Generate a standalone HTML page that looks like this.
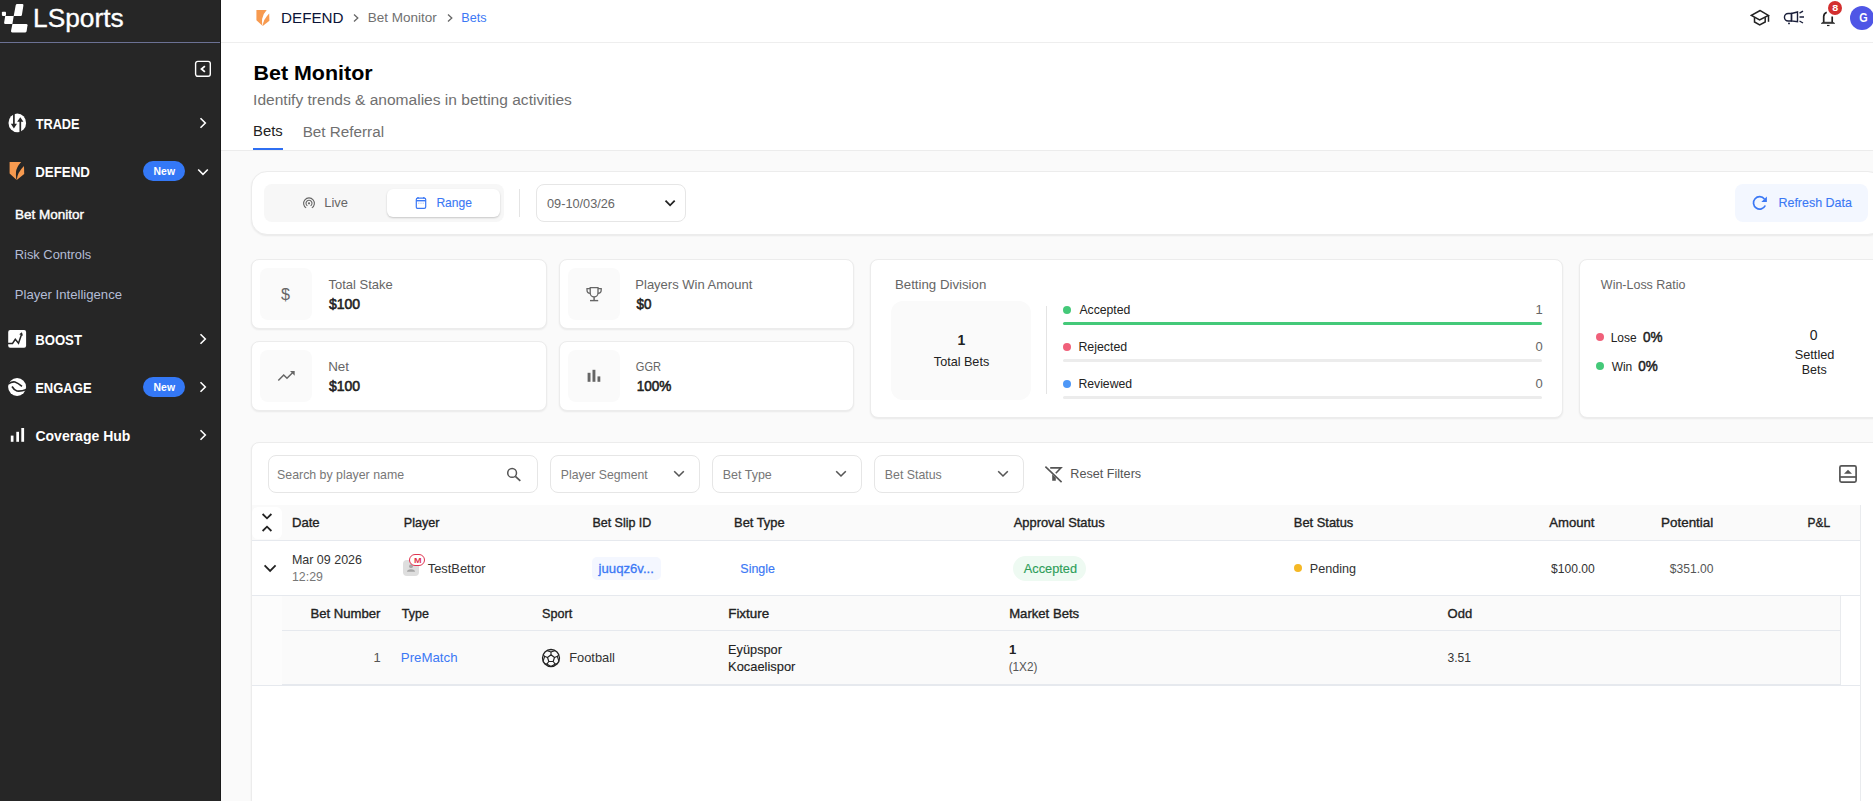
<!DOCTYPE html>
<html lang="en">
<head>
<meta charset="utf-8">
<title>Bet Monitor</title>
<style>
*{box-sizing:border-box;margin:0;padding:0}
html,body{width:1873px;height:801px;overflow:hidden;background:#fafafa}
body{font-family:"Liberation Sans",sans-serif;font-size:13px;color:#222;position:relative}
.b{position:absolute;display:block}
.t{position:absolute;white-space:nowrap;transform-origin:0 0;letter-spacing:0}
</style>
</head>
<body>
<!-- top bar + page head -->
<div class="b" style="left:221px;top:0px;width:1652px;height:43px;background:#fff;border-bottom:1px solid #eee;"></div>
<div class="b" style="left:221px;top:43px;width:1652px;height:108px;background:#fff;border-bottom:1px solid #ececec;"></div>
<!-- sidebar -->
<div class="b" style="left:0px;top:0px;width:221px;height:801px;background:#262626;border-right:1px solid #1a1a1a;"></div>
<div class="b" style="left:0px;top:42px;width:220px;height:1px;background:#6b7194;"></div>
<svg class="b" style="left:0px;top:0px" width="30" height="36" viewBox="0 0 30 36"><rect x="1.900" y="11.800" width="4.100" height="4.100" rx=".8" fill="#fff"/><path d="M17.200 4.100 H22.300 Q23.600 4.100 23.400 5.400 L21.900 15 Q21.700 15.900 20.800 15.900 H13.700 L15.700 5.200 Q15.900 4.100 17.200 4.100 Z" fill="#fff"/><path d="M5.200 15.900 H13.700 L12.400 23.900 H5 Q3.900 23.900 4.100 22.800 Z" fill="#fff"/><path d="M12.400 23.900 H26.200 Q27.700 23.900 27.500 25.300 L26.600 31.300 Q26.400 32.400 25.300 32.400 H12.200 Q10.800 32.400 11 31.100 Z" fill="#fff"/></svg>
<div class="t" style="left:33px;top:3px;font-size:25.5px;line-height:28px;color:#fff;transform:translate(.04px,.7px) scaleX(1.03);-webkit-text-stroke:.35px #fff;">LSports</div>
<svg class="b" style="left:194px;top:60px" width="18" height="18" viewBox="0 0 18 18"><rect x="1.600" y="1.400" width="14.700" height="14.900" rx="2.200" fill="none" stroke="#fff" stroke-width="1.400"/><path d="M10.900 6.100 L7.500 9 L10.900 11.900" fill="none" stroke="#fff" stroke-width="1.800"/></svg>
<svg class="b" style="left:8px;top:113px" width="19" height="20" viewBox="0 0 19 20"><ellipse cx="9.300" cy="9.900" rx="8.800" ry="9.300" fill="#fff"/><path d="M5.900 0 V12" stroke="#262626" stroke-width="1.700"/><path d="M2.800 10.800 H9 L5.900 15.600 Z" fill="#262626"/><path d="M12.300 20 V8" stroke="#262626" stroke-width="1.700"/><path d="M9.200 8.800 H15.400 L12.300 4.200 Z" fill="#262626"/></svg>
<div class="t" style="left:35px;top:116px;font-size:14px;line-height:16px;color:#fff;font-weight:bold;transform:translate(.66px,0px) scaleX(.91);">TRADE</div>
<svg class="b" style="left:196px;top:116.2px" width="14" height="14" viewBox="0 0 14 14"><path d="M4.500 2.200 L9.300 7 L4.500 11.800" fill="none" stroke="#fff" stroke-width="1.600"/></svg>
<svg class="b" style="left:8px;top:161px" width="18" height="20" viewBox="0 0 18 20"><path d="M1.600 1 H13.200 Q8.500 6 8 11 Q7.700 14.500 8.200 17.600 L8.700 19 L1.600 12.600 Z" fill="#f79a4f"/><path d="M16 5 L16.200 13 L8.700 19 Q9.300 11.500 16 5 Z" fill="#f79a4f"/></svg>
<div class="t" style="left:35px;top:164px;font-size:14px;line-height:16px;color:#fff;font-weight:bold;transform:translate(.22px,0px) scaleX(.95);">DEFEND</div>
<div class="b" style="left:143px;top:161px;width:42px;height:20px;background:#3478f6;border-radius:10px;"></div>
<div class="t" style="left:153px;top:165px;font-size:10.5px;line-height:12px;color:#fff;font-weight:bold;transform:translate(.61px,.2px) scaleX(.99);">New</div>
<svg class="b" style="left:196px;top:164.5px" width="14" height="14" viewBox="0 0 14 14"><path d="M2.200 4.500 L7 9.300 L11.800 4.500" fill="none" stroke="#fff" stroke-width="1.600"/></svg>
<div class="t" style="left:14px;top:207px;font-size:13px;line-height:15px;color:#fff;transform:translate(.93px,0px) scaleX(1.04);-webkit-text-stroke:.4px #fff;">Bet Monitor</div>
<div class="t" style="left:14px;top:247px;font-size:13px;line-height:15px;color:#b4bdd6;transform:translate(.74px,0px) scaleX(.99);">Risk Controls</div>
<div class="t" style="left:14px;top:287px;font-size:13px;line-height:15px;color:#b4bdd6;transform:translate(.73px,0px) scaleX(1.01);">Player Intelligence</div>
<svg class="b" style="left:8px;top:330px" width="19" height="19" viewBox="0 0 19 19"><rect x=".2" y="0" width="17.900" height="17.800" rx="2" fill="#fff"/><path d="M0 13.500 H4.500 L7.300 9.300 L10.500 13.200 L13.500 4.500" stroke="#262626" stroke-width="1.500" fill="none"/><path d="M11.200 4.300 L15 5.700 L13.900 2.200 Z" fill="#262626"/></svg>
<div class="t" style="left:35px;top:332px;font-size:14px;line-height:16px;color:#fff;font-weight:bold;transform:translate(.14px,0px) scaleX(.94);">BOOST</div>
<svg class="b" style="left:196px;top:332px" width="14" height="14" viewBox="0 0 14 14"><path d="M4.500 2.200 L9.300 7 L4.500 11.800" fill="none" stroke="#fff" stroke-width="1.600"/></svg>
<svg class="b" style="left:8px;top:378px" width="19" height="19" viewBox="0 0 19 19"><circle cx="9.100" cy="9" r="9" fill="#fff"/><path d="M0 6.200 Q4 3.300 7 4 Q10 5 14 8.300" stroke="#262626" stroke-width="1.600" fill="none"/><path d="M4 8.500 Q6 12 9 13 Q13 13.500 18.500 11.500" stroke="#262626" stroke-width="1.600" fill="none"/></svg>
<div class="t" style="left:35px;top:380px;font-size:14px;line-height:16px;color:#fff;font-weight:bold;transform:translate(.14px,0px) scaleX(.93);">ENGAGE</div>
<div class="b" style="left:143px;top:377px;width:42px;height:20px;background:#3478f6;border-radius:10px;"></div>
<div class="t" style="left:153px;top:381px;font-size:10.5px;line-height:12px;color:#fff;font-weight:bold;transform:translate(.61px,.2px) scaleX(.99);">New</div>
<svg class="b" style="left:196px;top:380px" width="14" height="14" viewBox="0 0 14 14"><path d="M4.500 2.200 L9.300 7 L4.500 11.800" fill="none" stroke="#fff" stroke-width="1.600"/></svg>
<svg class="b" style="left:8px;top:426px" width="18" height="18" viewBox="0 0 18 18"><rect x="2.800" y="9.600" width="2.700" height="6.200" fill="#fff"/><rect x="8.300" y="5.800" width="2.700" height="10" fill="#fff"/><rect x="13.300" y="2" width="2.800" height="13.800" fill="#fff"/></svg>
<div class="t" style="left:35px;top:428px;font-size:14px;line-height:16px;color:#fff;font-weight:bold;transform:translate(.43px,0px);">Coverage Hub</div>
<svg class="b" style="left:196px;top:428px" width="14" height="14" viewBox="0 0 14 14"><path d="M4.500 2.200 L9.300 7 L4.500 11.800" fill="none" stroke="#fff" stroke-width="1.600"/></svg>
<!-- breadcrumb -->
<svg class="b" style="left:255px;top:9px" width="16" height="18" viewBox="0 0 18 20"><path d="M1.600 1 H13.200 Q8.500 6 8 11 Q7.700 14.500 8.200 17.600 L8.700 19 L1.600 12.600 Z" fill="#f79a4f"/><path d="M16 5 L16.200 13 L8.700 19 Q9.300 11.500 16 5 Z" fill="#f79a4f"/></svg>
<div class="t" style="left:281px;top:9px;font-size:15.5px;line-height:17px;color:#0c1437;transform:translate(.05px,.3px) scaleX(.98);">DEFEND</div>
<svg class="b" style="left:349.5px;top:12px" width="12" height="12" viewBox="0 0 12 12"><path d="M4 2.500 L7.800 6 L4 9.500" fill="none" stroke="#666" stroke-width="1.300"/></svg>
<div class="t" style="left:367px;top:10px;font-size:12.5px;line-height:14px;color:#707070;transform:translate(.7px,.9px) scaleX(1.08);">Bet Monitor</div>
<svg class="b" style="left:443.5px;top:12px" width="12" height="12" viewBox="0 0 12 12"><path d="M4 2.500 L7.800 6 L4 9.500" fill="none" stroke="#666" stroke-width="1.300"/></svg>
<div class="t" style="left:461px;top:10px;font-size:12.5px;line-height:14px;color:#3b78f5;transform:translate(.36px,.9px) scaleX(1.01);">Bets</div>
<!-- page head -->
<div class="t" style="left:253px;top:61px;font-size:19.5px;line-height:22px;color:#000;font-weight:bold;transform:translate(.48px,.7px) scaleX(1.1);">Bet Monitor</div>
<div class="t" style="left:253px;top:91px;font-size:14px;line-height:16px;color:#707070;transform:translate(.07px,.6px) scaleX(1.11);">Identify trends &amp; anomalies in betting activities</div>
<div class="t" style="left:252px;top:122px;font-size:14px;line-height:16px;color:#222;transform:translate(.98px,.7px) scaleX(1.06);">Bets</div>
<div class="t" style="left:302px;top:123px;font-size:14px;line-height:16px;color:#707070;transform:translate(.65px,.8px) scaleX(1.09);">Bet Referral</div>
<div class="b" style="left:253px;top:148px;width:30px;height:2px;background:#2f6ff2;"></div>
<!-- filter card -->
<div class="b" style="left:251px;top:171px;width:1633px;height:64px;background:#fff;border-radius:16px;border:1px solid #ececec;box-shadow:0 1px 2px rgba(0,0,0,.07);"></div>
<div class="b" style="left:264px;top:184px;width:240px;height:38px;background:#f7f7f7;border-radius:8px;"></div>
<div class="t" style="left:324px;top:194px;font-size:13px;line-height:15px;color:#666;transform:translate(.35px,.9px) scaleX(.99);">Live</div>
<div class="b" style="left:386.5px;top:188.5px;width:113.5px;height:28.5px;background:#fff;border-radius:6px;box-shadow:0 1px 2px rgba(0,0,0,.2);"></div>
<div class="t" style="left:436px;top:194px;font-size:13px;line-height:15px;color:#3b78f5;transform:translate(.38px,.9px) scaleX(.93);-webkit-text-stroke:.12px #3b78f5;">Range</div>
<div class="b" style="left:519px;top:189px;width:1px;height:28px;background:#e4e4e4;"></div>
<div class="b" style="left:536px;top:184px;width:150px;height:38px;background:#fff;border-radius:8px;border:1px solid #e6e6e6;"></div>
<div class="t" style="left:547px;top:196px;font-size:12px;line-height:14px;color:#666;transform:translate(0px,.6px) scaleX(1.06);">09-10/03/26</div>
<div class="b" style="left:1735px;top:184px;width:133px;height:38px;background:#f3f7ff;border-radius:8px;"></div>
<div class="t" style="left:1778px;top:195px;font-size:13px;line-height:15px;color:#3b78f5;transform:translate(.44px,.1px) scaleX(.96);-webkit-text-stroke:.12px #3b78f5;">Refresh Data</div>
<!-- stat cards -->
<div class="b" style="left:251px;top:259px;width:296px;height:70px;background:#fff;border-radius:8px;border:1px solid #ececec;box-shadow:0 1px 2px rgba(0,0,0,.07);"></div>
<div class="b" style="left:260px;top:268px;width:52px;height:52px;background:#fafafa;border-radius:8px;"></div>
<div class="t" style="left:328px;top:277px;font-size:13px;line-height:15px;color:#666;transform:translate(.41px,0px);">Total Stake</div>
<div class="t" style="left:328px;top:295px;font-size:14px;line-height:16px;color:#222;transform:translate(.89px,.6px) scaleX(1);-webkit-text-stroke:.55px #222;">$100</div>
<div class="b" style="left:559px;top:259px;width:295px;height:70px;background:#fff;border-radius:8px;border:1px solid #ececec;box-shadow:0 1px 2px rgba(0,0,0,.07);"></div>
<div class="b" style="left:568px;top:268px;width:52px;height:52px;background:#fafafa;border-radius:8px;"></div>
<div class="t" style="left:635px;top:277px;font-size:13px;line-height:15px;color:#666;transform:translate(.33px,0px);">Players Win Amount</div>
<div class="t" style="left:636px;top:295px;font-size:14px;line-height:16px;color:#222;transform:translate(.6px,.6px) scaleX(.96);-webkit-text-stroke:.55px #222;">$0</div>
<div class="b" style="left:251px;top:341px;width:296px;height:70px;background:#fff;border-radius:8px;border:1px solid #ececec;box-shadow:0 1px 2px rgba(0,0,0,.07);"></div>
<div class="b" style="left:260px;top:350px;width:52px;height:52px;background:#fafafa;border-radius:8px;"></div>
<div class="t" style="left:328px;top:359px;font-size:13px;line-height:15px;color:#666;transform:translate(.2px,0px) scaleX(1.03);">Net</div>
<div class="t" style="left:328px;top:377px;font-size:14px;line-height:16px;color:#222;transform:translate(.89px,.6px) scaleX(1);-webkit-text-stroke:.55px #222;">$100</div>
<div class="b" style="left:559px;top:341px;width:295px;height:70px;background:#fff;border-radius:8px;border:1px solid #ececec;box-shadow:0 1px 2px rgba(0,0,0,.07);"></div>
<div class="b" style="left:568px;top:350px;width:52px;height:52px;background:#fafafa;border-radius:8px;"></div>
<div class="t" style="left:635px;top:359px;font-size:13px;line-height:15px;color:#666;transform:translate(.85px,0px) scaleX(.85);">GGR</div>
<div class="t" style="left:636px;top:377px;font-size:14px;line-height:16px;color:#222;transform:translate(.7px,.6px) scaleX(.97);-webkit-text-stroke:.55px #222;">100%</div>
<!-- betting division -->
<div class="b" style="left:870px;top:259px;width:693px;height:159px;background:#fff;border-radius:8px;border:1px solid #ececec;box-shadow:0 1px 2px rgba(0,0,0,.07);"></div>
<div class="t" style="left:894px;top:277px;font-size:13px;line-height:15px;color:#666;transform:translate(.91px,0px) scaleX(1.02);">Betting Division</div>
<div class="b" style="left:891px;top:301px;width:140px;height:98.5px;background:#fafafa;border-radius:12px;"></div>
<div class="t" style="left:957px;top:332px;font-size:14px;line-height:16px;color:#222;font-weight:bold;transform:translate(.53px,0px);">1</div>
<div class="t" style="left:933px;top:354px;font-size:13px;line-height:15px;color:#222;transform:translate(.82px,.3px) scaleX(.97);">Total Bets</div>
<div class="b" style="left:1046px;top:306px;width:1px;height:88px;background:#e4e4e4;"></div>
<div class="b" style="left:1063px;top:306px;width:8px;height:8px;background:#44c979;border-radius:4px;"></div>
<div class="t" style="left:1079px;top:302px;font-size:13px;line-height:15px;color:#222;transform:translate(.38px,.2px) scaleX(.94);">Accepted</div>
<div class="t" style="left:1535px;top:302px;font-size:13px;line-height:15px;color:#666;transform:translate(.6px,.2px);">1</div>
<div class="b" style="left:1063px;top:322px;width:479.2px;height:3px;background:#44c979;border-radius:1.5px;"></div>
<div class="b" style="left:1063px;top:343px;width:8px;height:8px;background:#f0607a;border-radius:4px;"></div>
<div class="t" style="left:1078px;top:339px;font-size:13px;line-height:15px;color:#222;transform:translate(.39px,.2px) scaleX(.95);">Rejected</div>
<div class="t" style="left:1535px;top:339px;font-size:13px;line-height:15px;color:#666;transform:translate(.47px,.2px);">0</div>
<div class="b" style="left:1063px;top:359px;width:479.2px;height:3px;background:#ececec;border-radius:1.5px;"></div>
<div class="b" style="left:1063px;top:380px;width:8px;height:8px;background:#4d97f7;border-radius:4px;"></div>
<div class="t" style="left:1078px;top:376px;font-size:13px;line-height:15px;color:#222;transform:translate(.4px,.2px) scaleX(.94);">Reviewed</div>
<div class="t" style="left:1535px;top:376px;font-size:13px;line-height:15px;color:#666;transform:translate(.47px,.2px);">0</div>
<div class="b" style="left:1063px;top:396px;width:479.2px;height:3px;background:#ececec;border-radius:1.5px;"></div>
<!-- win-loss ratio -->
<div class="b" style="left:1579px;top:259px;width:321px;height:159px;background:#fff;border-radius:8px;border:1px solid #ececec;box-shadow:0 1px 2px rgba(0,0,0,.07);"></div>
<div class="t" style="left:1600px;top:277px;font-size:13px;line-height:15px;color:#666;transform:translate(.85px,.3px) scaleX(.96);">Win-Loss Ratio</div>
<div class="b" style="left:1596px;top:333.2px;width:8px;height:8px;background:#f0607a;border-radius:4px;"></div>
<div class="t" style="left:1610px;top:330px;font-size:13px;line-height:15px;color:#222;transform:translate(.72px,.1px) scaleX(.92);">Lose</div>
<div class="t" style="left:1642px;top:328px;font-size:15px;line-height:17px;color:#222;transform:translate(.98px,.1px) scaleX(.9);-webkit-text-stroke:.5px #222;">0%</div>
<div class="b" style="left:1596px;top:362.2px;width:8px;height:8px;background:#44c979;border-radius:4px;"></div>
<div class="t" style="left:1611px;top:358px;font-size:13px;line-height:15px;color:#222;transform:translate(.65px,.9px) scaleX(.92);">Win</div>
<div class="t" style="left:1638px;top:356px;font-size:15px;line-height:17px;color:#222;transform:translate(.27px,.9px) scaleX(.9);-webkit-text-stroke:.5px #222;">0%</div>
<div class="t" style="left:1809px;top:326px;font-size:14px;line-height:16px;color:#222;transform:translate(.85px,.9px);">0</div>
<div class="t" style="left:1794px;top:347px;font-size:13px;line-height:15px;color:#222;transform:translate(.73px,.4px) scaleX(.98);">Settled</div>
<div class="t" style="left:1801px;top:362px;font-size:13px;line-height:15px;color:#222;transform:translate(.67px,0px) scaleX(.96);">Bets</div>
<!-- table card -->
<div class="b" style="left:251px;top:442px;width:1649px;height:388px;background:#fff;border-radius:8px;border:1px solid #ececec;box-shadow:0 1px 2px rgba(0,0,0,.07);"></div>
<div class="b" style="left:268px;top:455px;width:269.5px;height:37.5px;background:#fff;border-radius:8px;border:1px solid #e6e6e6;"></div>
<div class="t" style="left:277px;top:467px;font-size:13px;line-height:15px;color:#777;transform:translate(.04px,.4px) scaleX(.95);">Search by player name</div>
<div class="b" style="left:550.3px;top:455px;width:149.5px;height:37.5px;background:#fff;border-radius:8px;border:1px solid #e6e6e6;"></div>
<div class="t" style="left:560px;top:467px;font-size:13px;line-height:15px;color:#777;transform:translate(.79px,.4px) scaleX(.94);">Player Segment</div>
<svg class="b" style="left:672.3px;top:467px" width="14" height="14" viewBox="0 0 14 14"><path d="M2.200 4.300 L7 9 L11.800 4.300" fill="none" stroke="#555" stroke-width="1.600"/></svg>
<div class="b" style="left:712.3px;top:455px;width:149.5px;height:37.5px;background:#fff;border-radius:8px;border:1px solid #e6e6e6;"></div>
<div class="t" style="left:722px;top:467px;font-size:13px;line-height:15px;color:#777;transform:translate(.78px,.4px) scaleX(.96);">Bet Type</div>
<svg class="b" style="left:834.3px;top:467px" width="14" height="14" viewBox="0 0 14 14"><path d="M2.200 4.300 L7 9 L11.800 4.300" fill="none" stroke="#555" stroke-width="1.600"/></svg>
<div class="b" style="left:874.3px;top:455px;width:149.5px;height:37.5px;background:#fff;border-radius:8px;border:1px solid #e6e6e6;"></div>
<div class="t" style="left:884px;top:467px;font-size:13px;line-height:15px;color:#777;transform:translate(.79px,.4px) scaleX(.95);">Bet Status</div>
<svg class="b" style="left:996.3px;top:467px" width="14" height="14" viewBox="0 0 14 14"><path d="M2.200 4.300 L7 9 L11.800 4.300" fill="none" stroke="#555" stroke-width="1.600"/></svg>
<div class="t" style="left:1070px;top:466px;font-size:13px;line-height:15px;color:#555;transform:translate(.36px,.2px) scaleX(.97);">Reset Filters</div>
<!-- table header -->
<div class="b" style="left:252px;top:505px;width:1608px;height:35px;background:#fafafa;border-bottom:1px solid #e6e9ee;height:36px;"></div>
<div class="b" style="left:252px;top:506.5px;width:29.5px;height:32.5px;background:#fff;border-radius:6px;"></div>
<div class="b" style="left:1860px;top:505px;width:1px;height:296px;background:#e9ebee;"></div>
<div class="t" style="left:291px;top:515px;font-size:13px;line-height:15px;color:#222;transform:translate(.93px,0px) scaleX(1.01);-webkit-text-stroke:.35px #222;">Date</div>
<div class="t" style="left:403px;top:515px;font-size:13px;line-height:15px;color:#222;transform:translate(.77px,0px) scaleX(.97);-webkit-text-stroke:.35px #222;">Player</div>
<div class="t" style="left:592px;top:515px;font-size:13px;line-height:15px;color:#222;transform:translate(.39px,0px) scaleX(.96);-webkit-text-stroke:.35px #222;">Bet Slip ID</div>
<div class="t" style="left:734px;top:515px;font-size:13px;line-height:15px;color:#222;transform:translate(.06px,0px) scaleX(.99);-webkit-text-stroke:.35px #222;">Bet Type</div>
<div class="t" style="left:1013px;top:515px;font-size:13px;line-height:15px;color:#222;transform:translate(.78px,0px) scaleX(.99);-webkit-text-stroke:.35px #222;">Approval Status</div>
<div class="t" style="left:1293px;top:515px;font-size:13px;line-height:15px;color:#222;transform:translate(.86px,0px) scaleX(.99);-webkit-text-stroke:.35px #222;">Bet Status</div>
<div class="t" style="left:1549px;top:515px;font-size:13px;line-height:15px;color:#222;transform:translate(.18px,0px) scaleX(1.01);-webkit-text-stroke:.35px #222;">Amount</div>
<div class="t" style="left:1661px;top:515px;font-size:13px;line-height:15px;color:#222;transform:translate(.11px,0px) scaleX(1.03);-webkit-text-stroke:.35px #222;">Potential</div>
<div class="t" style="left:1807px;top:515px;font-size:13px;line-height:15px;color:#222;transform:translate(.53px,0px) scaleX(.92);-webkit-text-stroke:.35px #222;">P&amp;L</div>
<!-- table row -->
<div class="b" style="left:252px;top:595px;width:1608px;height:1px;background:#e6e9ee;"></div>
<div class="t" style="left:291px;top:552px;font-size:13px;line-height:15px;color:#333;transform:translate(.88px,.1px) scaleX(.96);">Mar 09 2026</div>
<div class="t" style="left:291px;top:568px;font-size:13px;line-height:15px;color:#777;transform:translate(.96px,.8px) scaleX(.95);">12:29</div>
<div class="b" style="left:403px;top:560px;width:16px;height:16px;background:#dedede;border-radius:4px;"></div>
<svg class="b" style="left:403px;top:560px" width="16" height="16" viewBox="0 0 16 16"><circle cx="8" cy="6.200" r="1.900" fill="#a6a6a6"/><path d="M4 11.800 Q4 9.300 8 9.300 Q12 9.300 12 11.800 Z" fill="#a6a6a6"/></svg>
<div class="b" style="left:409px;top:553.7px;width:16px;height:12.3px;background:#fff;border-radius:6.2px;border:1.200px solid #e0344f;"></div>
<div class="t" style="left:413px;top:555px;font-size:8px;line-height:9px;color:#e0344f;font-weight:bold;transform:translate(.9px,.8px) scaleX(1.14);">M</div>
<div class="t" style="left:427px;top:561px;font-size:13px;line-height:15px;color:#333;transform:translate(.72px,.1px) scaleX(.99);">TestBettor</div>
<div class="b" style="left:592px;top:557px;width:69px;height:23px;background:#f4f7ff;border-radius:5px;"></div>
<div class="t" style="left:598px;top:561px;font-size:13px;line-height:15px;color:#3b78f5;transform:translate(.61px,0px) scaleX(1.01);-webkit-text-stroke:.3px #3b78f5;">juuqz6v...</div>
<div class="t" style="left:740px;top:561px;font-size:13px;line-height:15px;color:#3b78f5;transform:translate(.33px,0px) scaleX(.96);-webkit-text-stroke:.15px #3b78f5;">Single</div>
<div class="b" style="left:1012.7px;top:556px;width:73.1px;height:25px;background:#eefaf2;border-radius:12.5px;"></div>
<div class="t" style="left:1023px;top:561px;font-size:13px;line-height:15px;color:#2f9e5a;transform:translate(.86px,0px) scaleX(.98);-webkit-text-stroke:.15px #2f9e5a;">Accepted</div>
<div class="b" style="left:1294.2px;top:563.8px;width:8px;height:8px;background:#f5b825;border-radius:4px;"></div>
<div class="t" style="left:1309px;top:560px;font-size:13px;line-height:15px;color:#333;transform:translate(.86px,.6px) scaleX(.97);">Pending</div>
<div class="t" style="left:1551px;top:560px;font-size:13px;line-height:15px;color:#333;transform:translate(.08px,.6px) scaleX(.93);">$100.00</div>
<div class="t" style="left:1669px;top:560px;font-size:13px;line-height:15px;color:#555;transform:translate(.78px,.6px) scaleX(.93);">$351.00</div>
<!-- nested table -->
<div class="b" style="left:252px;top:596px;width:30px;height:89px;background:#fcfcfc;"></div>
<div class="b" style="left:282px;top:596px;width:1559px;height:89px;background:#fafafa;border-right:1px solid #e9ebee;"></div>
<div class="b" style="left:282px;top:630px;width:1558px;height:1px;background:#e6e9ee;"></div>
<div class="b" style="left:282px;top:684px;width:1559px;height:1px;background:#e6e9ee;"></div>
<div class="b" style="left:252px;top:685px;width:1608px;height:1px;background:#e6e9ee;"></div>
<div class="t" style="left:310px;top:605px;font-size:13px;line-height:15px;color:#222;transform:translate(.43px,.9px) scaleX(1.01);-webkit-text-stroke:.35px #222;">Bet Number</div>
<div class="t" style="left:401px;top:605px;font-size:13px;line-height:15px;color:#222;transform:translate(.83px,.9px) scaleX(.96);-webkit-text-stroke:.35px #222;">Type</div>
<div class="t" style="left:542px;top:605px;font-size:13px;line-height:15px;color:#222;transform:translate(.04px,.9px) scaleX(.97);-webkit-text-stroke:.35px #222;">Sport</div>
<div class="t" style="left:728px;top:605px;font-size:13px;line-height:15px;color:#222;transform:translate(.21px,.9px) scaleX(1.03);-webkit-text-stroke:.35px #222;">Fixture</div>
<div class="t" style="left:1009px;top:605px;font-size:13px;line-height:15px;color:#222;transform:translate(.14px,.9px) scaleX(1.01);-webkit-text-stroke:.35px #222;">Market Bets</div>
<div class="t" style="left:1447px;top:605px;font-size:13px;line-height:15px;color:#222;transform:translate(.6px,.9px);-webkit-text-stroke:.35px #222;">Odd</div>
<div class="t" style="left:373px;top:649px;font-size:13px;line-height:15px;color:#555;transform:translate(.6px,.9px);">1</div>
<div class="t" style="left:400px;top:649px;font-size:13px;line-height:15px;color:#3b78f5;transform:translate(.81px,.9px) scaleX(1.02);">PreMatch</div>
<div class="t" style="left:569px;top:649px;font-size:13px;line-height:15px;color:#333;transform:translate(.14px,.7px) scaleX(.99);">Football</div>
<div class="t" style="left:728px;top:641px;font-size:13px;line-height:15px;color:#222;transform:translate(.12px,.7px) scaleX(.98);-webkit-text-stroke:.12px #222;">Eyüpspor</div>
<div class="t" style="left:728px;top:658px;font-size:13px;line-height:15px;color:#222;transform:translate(.12px,.7px) scaleX(.99);-webkit-text-stroke:.12px #222;">Kocaelispor</div>
<div class="t" style="left:1008px;top:641px;font-size:13px;line-height:15px;color:#222;font-weight:bold;transform:translate(.99px,.7px);">1</div>
<div class="t" style="left:1008px;top:659px;font-size:12.5px;line-height:14px;color:#555;transform:translate(.67px,.7px) scaleX(.94);">(1X2)</div>
<div class="t" style="left:1447px;top:650px;font-size:13px;line-height:15px;color:#333;transform:translate(.54px,0px) scaleX(.93);">3.51</div>
<!-- icons -->
<svg class="b" style="left:302px;top:196px" width="14" height="14" viewBox="0 0 14 14"><circle cx="7" cy="7.300" r="1.100" fill="#666"/><path d="M5.410 9.840 A3 3 0 1 1 8.590 9.840" fill="none" stroke="#666" stroke-width="1.100"/><path d="M4.140 11.880 A5.400 5.400 0 1 1 9.860 11.880" fill="none" stroke="#666" stroke-width="1.100"/></svg>
<svg class="b" style="left:415px;top:196px" width="13" height="14" viewBox="0 0 13 14"><rect x="1.300" y="2.100" width="9.400" height="10.300" rx="1.400" fill="none" stroke="#3b78f5" stroke-width="1.200"/><path d="M1.300 4.700 H10.700" stroke="#3b78f5" stroke-width="1.400"/><path d="M3 1 V2.500 M8.800 1 V2.500" stroke="#3b78f5" stroke-width="1.300"/><path d="M3.300 7.200 H4.300 M5.500 7.200 H6.500 M7.700 7.200 H8.700" stroke="#3b78f5" stroke-width=".9" opacity=".6"/></svg>
<svg class="b" style="left:663px;top:196px" width="14" height="14" viewBox="0 0 14 14"><path d="M2.500 4.600 L7.100 9.300 L11.700 4.600" fill="none" stroke="#222" stroke-width="1.800"/></svg>
<svg class="b" style="left:1751px;top:194px" width="18" height="18" viewBox="0 0 18 18"><path d="M13.450 4.920 A6.200 6.200 0 1 0 14.300 11.500" fill="none" stroke="#3b78f5" stroke-width="1.700"/><path d="M15.900 2.600 V8 H10.300 Z" fill="#3b78f5"/></svg>
<div class="t" style="left:280px;top:285px;font-size:17px;line-height:19px;color:#666;transform:translate(.94px,.2px) scaleX(.95);">$</div>
<svg class="b" style="left:585px;top:285px" width="18" height="18" viewBox="0 0 18 18"><path d="M5.200 2.600 H13 V8 A3.900 3.900 0 0 1 5.200 8 Z" fill="none" stroke="#666" stroke-width="1.300"/><path d="M5.200 3.600 H2 V5 A3.300 3.300 0 0 0 5.300 8.300 M13 3.600 H16.200 V5 A3.300 3.300 0 0 1 12.900 8.300" fill="none" stroke="#666" stroke-width="1.300"/><path d="M9.100 11.900 V15.500" stroke="#666" stroke-width="1.500"/><path d="M5 15.600 H13.200" stroke="#666" stroke-width="1.400"/></svg>
<svg class="b" style="left:277px;top:369px" width="19" height="14" viewBox="0 0 19 14"><path d="M1.300 11.500 L6.700 6 L10 9.300 L16 3.300" fill="none" stroke="#666" stroke-width="1.500"/><path d="M13 2 H17.700 V6.700 Z" fill="#666"/></svg>
<svg class="b" style="left:586px;top:368px" width="16" height="16" viewBox="0 0 16 16"><rect x="1.600" y="4.800" width="2.900" height="9" fill="#666"/><rect x="6.500" y="1.800" width="2.900" height="12" fill="#666"/><rect x="11.500" y="8.400" width="2.800" height="5.400" fill="#666"/></svg>
<svg class="b" style="left:505px;top:465px" width="18" height="18" viewBox="0 0 18 18"><circle cx="7.100" cy="7.900" r="4.400" fill="none" stroke="#555" stroke-width="1.500"/><path d="M10.400 11.300 L15.300 15.900" stroke="#555" stroke-width="1.700"/></svg>
<svg class="b" style="left:1044px;top:465px" width="19" height="19" viewBox="0 0 19 19"><path d="M1.400 1.600 L17.600 17.200" stroke="#555" stroke-width="1.600"/><path d="M6.200 2.900 H17 L11.800 8.200" fill="none" stroke="#555" stroke-width="1.600"/><path d="M8.200 9.300 L11.800 12.700 V15.800 H8.200 Z" fill="#555"/></svg>
<svg class="b" style="left:1838px;top:464px" width="20" height="20" viewBox="0 0 20 20"><rect x="1.900" y="1.800" width="16.200" height="16.300" rx="1.500" fill="none" stroke="#555" stroke-width="1.700"/><path d="M1.900 13 H18.100" stroke="#555" stroke-width="1.700"/><path d="M6 9.800 L10 5.800 L14 9.800 Z" fill="#555"/></svg>
<svg class="b" style="left:260px;top:511px" width="14" height="22" viewBox="0 0 14 22"><path d="M2.600 3 L7 7.300 L11.400 3" fill="none" stroke="#222" stroke-width="1.800"/><path d="M2.600 20 L7 15.700 L11.400 20" fill="none" stroke="#222" stroke-width="1.800"/></svg>
<svg class="b" style="left:262px;top:561px" width="16" height="14" viewBox="0 0 16 14"><path d="M2.600 4.300 L8.100 9.900 L13.600 4.300" fill="none" stroke="#222" stroke-width="1.800"/></svg>
<svg class="b" style="left:541px;top:648px" width="20" height="20" viewBox="0 0 20 20"><circle cx="10" cy="10" r="8.500" fill="none" stroke="#222" stroke-width="1.300"/><path d="M10 6.800 L13.500 9.500 L12.200 13.500 H7.800 L6.500 9.500 Z" fill="none" stroke="#222" stroke-width="1.200"/><path d="M10 6.800 V3.600 M13.500 9.500 L16.600 8.300 M12.200 13.500 L14.200 16.200 M7.800 13.500 L5.800 16.200 M6.500 9.500 L3.400 8.300" stroke="#222" stroke-width="1.100"/><path d="M6.200 2.700 L10 3.900 L13.800 2.700 M17.800 6.500 L16.400 8.600 L17.800 12.800 M16.200 15.800 L14 16.100 L10.300 18.400 M3.800 15.800 L6 16.100 L9.700 18.400 M2.200 6.500 L3.600 8.600 L2.200 12.800" fill="none" stroke="#222" stroke-width="1.100"/></svg>
<!-- top right -->
<svg class="b" style="left:1750px;top:9px" width="20" height="18" viewBox="0 0 20 18"><path d="M10.200 1.500 L1.400 6.400 L9.600 10.800 L18.400 6.400 Z" fill="none" stroke="#222" stroke-width="1.500" stroke-linejoin="miter"/><path d="M4.500 8.300 V13 L9.700 16 L15.200 13 V8.300" fill="none" stroke="#222" stroke-width="1.500"/><path d="M18.500 6.500 V12.800" stroke="#222" stroke-width="1.500"/></svg>
<svg class="b" style="left:1783px;top:9px" width="22" height="18" viewBox="0 0 22 18"><path d="M8.500 4.500 H5.200 A3.700 3.700 0 0 0 5.200 12 H8.500 Z" fill="none" stroke="#1a1f3a" stroke-width="1.400"/><path d="M8.500 4.500 L14.500 3 V12.800 L8.500 12 Z" fill="none" stroke="#1a1f3a" stroke-width="1.400"/><path d="M16.500 4.200 L20 2.200 M16.500 8 H21 M16.500 12 L20 14" stroke="#1a1f3a" stroke-width="1.400"/><circle cx="6" cy="14.400" r=".95" fill="#1a1f3a"/></svg>
<svg class="b" style="left:1820px;top:10px" width="16" height="18" viewBox="0 0 16 18"><path d="M3.700 12.500 V6.500 Q3.700 3.500 6.700 2.200" fill="none" stroke="#222" stroke-width="1.700"/><path d="M12.200 6.500 V12.500" stroke="#222" stroke-width="1.700"/><path d="M1.200 13.400 L3 12.200 H13 L14.800 13.400 Z" fill="#222" stroke="#222" stroke-width=".6"/><path d="M7 15.500 H9.500" stroke="#222" stroke-width="1.200"/></svg>
<div class="b" style="left:1828px;top:1px;width:14px;height:14px;background:#d32f2f;border-radius:7px;"></div>
<div class="t" style="left:1832px;top:2px;font-size:9.5px;line-height:11px;color:#fff;font-weight:bold;transform:translate(.37px,.2px) scaleX(1.13);">8</div>
<div class="b" style="left:1850px;top:6px;width:24px;height:24px;background:#4f56e6;border-radius:12px;"></div>
<div class="t" style="left:1859px;top:11px;font-size:12px;line-height:14px;color:#fff;font-weight:bold;transform:translate(.26px,.2px) scaleX(.9);">G</div>
</body>
</html>
